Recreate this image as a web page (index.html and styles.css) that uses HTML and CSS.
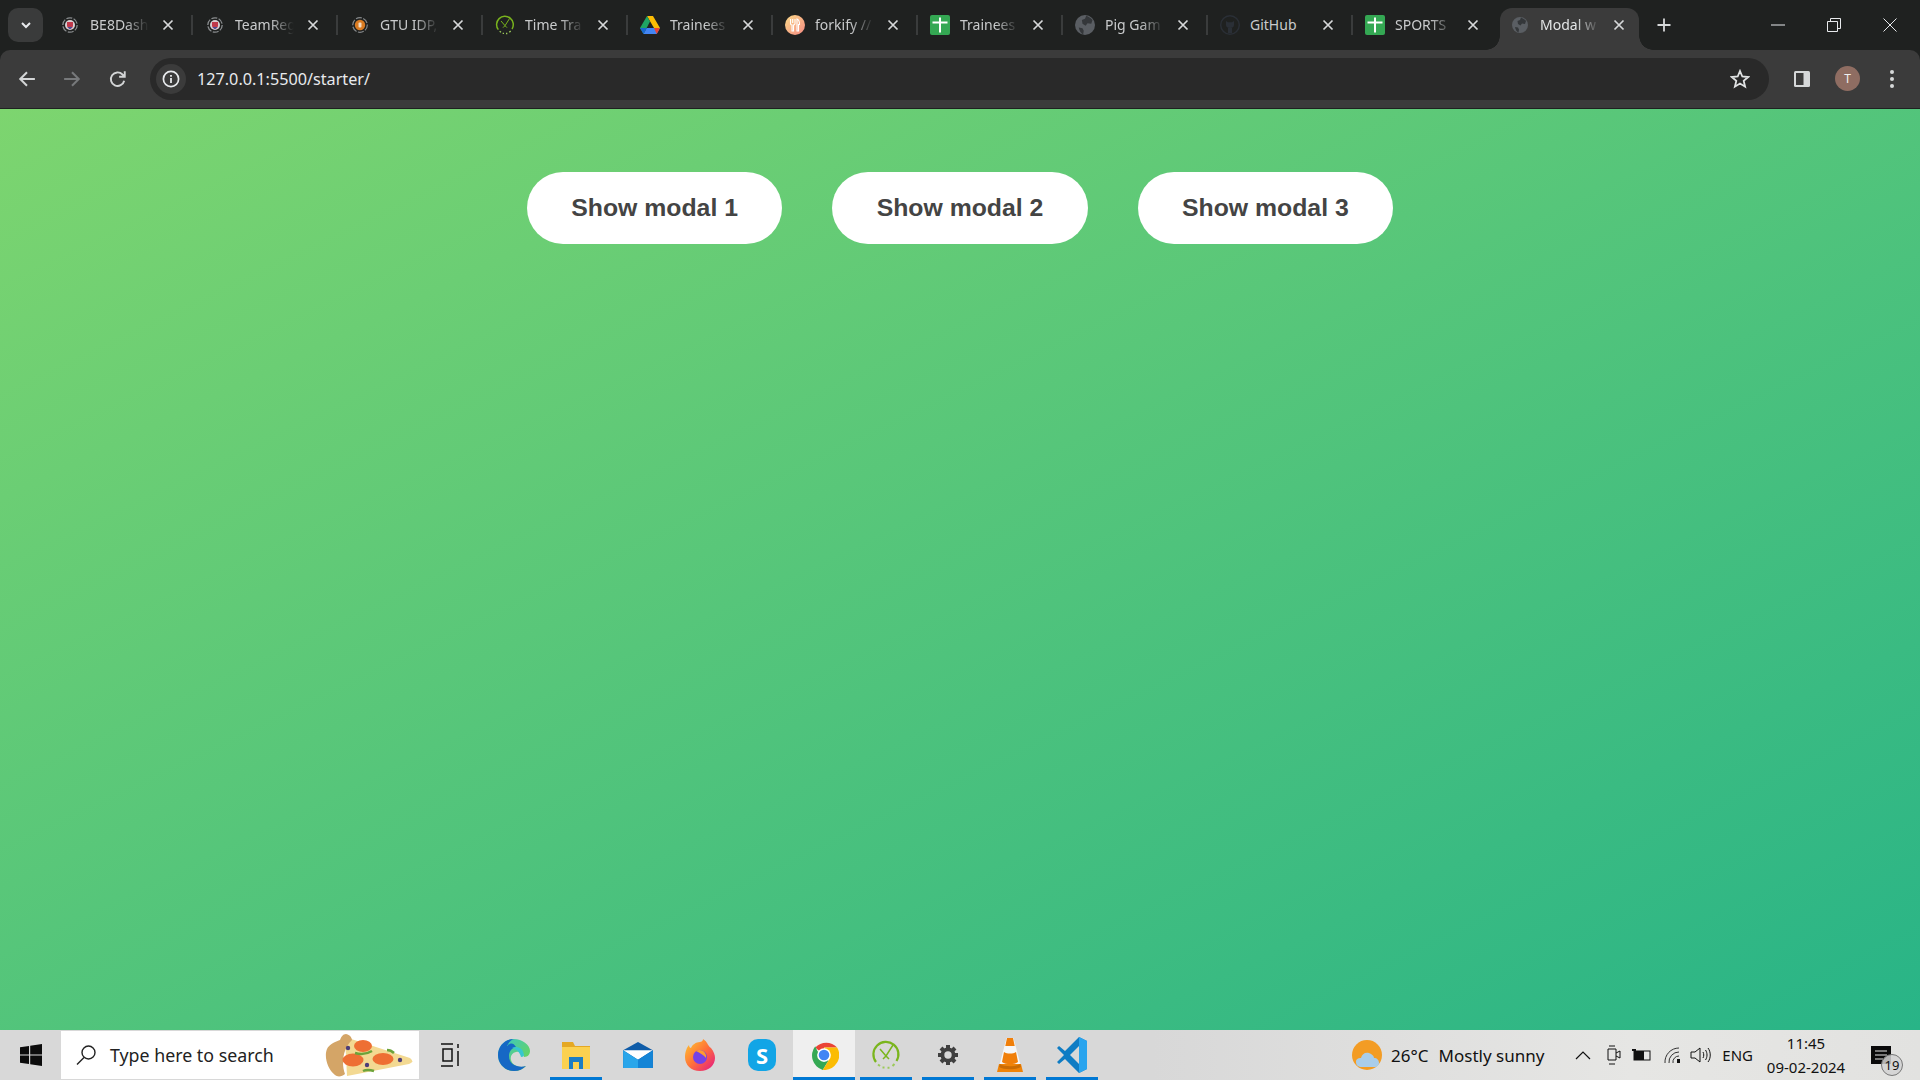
FILE: index.html
```html
<!DOCTYPE html>
<html lang="en">
  <head>
    <meta charset="UTF-8" />
    <title>Modal window</title>
    <link rel="stylesheet" href="styles.css" />
  </head>
  <body>
    <svg class="defs" width="0" height="0">
      <defs>
        <symbol id="i-close" viewBox="0 0 16 16">
          <path d="M3.5 3.5l9 9M12.5 3.5l-9 9" stroke="#d6d8d9" stroke-width="1.7" fill="none" />
        </symbol>
        <symbol id="i-shield" viewBox="0 0 16 16">
          <circle cx="8" cy="8" r="7.2" fill="none" stroke="#8a8d8f" stroke-width="1.3" stroke-dasharray="6 1.5" />
          <circle cx="8" cy="8" r="5" fill="#d9cfd2" />
          <path d="M5 5h6v3.5c0 2-1.5 3-3 3.5-1.500-.5-3-1.500-3-3.500z" fill="#c0394b" />
          <path d="M5.500 10h5l-2.500 2.200z" fill="#3f4f9c" />
        </symbol>
        <symbol id="i-sheet" viewBox="0 0 20 20">
          <rect width="20" height="20" rx="2" fill="#34a853" />
          <path d="M2.500 7.500h15M10 2.500v15" stroke="#fff" stroke-width="2" fill="none" />
        </symbol>
        <symbol id="i-globe" viewBox="0 0 16 16">
          <circle cx="8" cy="8" r="8" fill="#5a5e63" />
          <path d="M9 0.500c2 1 3.500 1.500 5 3.500l-1 3-3-.5-1.500 2-2.500-1.500-.5-3 2.500-1zM3 10l3 .5 1 2-.5 3C5 15 3.500 13 3 10z" fill="#34373a" />
        </symbol>
        <symbol id="i-clock" viewBox="0 0 30 30">
          <path d="M5 22A12.500 12.500 0 1 1 25.500 21" fill="none" stroke="#7ab51d" stroke-width="2.200" />
          <path d="M7 24.500l2 1.500M11.500 27.500h2M16.500 27.700h2M21.500 26l2-2" stroke="#9cc95a" stroke-width="2" fill="none" />
          <path d="M9 9l6 7 7-11M15 16l-3 3M15 16l3 3" stroke="#7ab51d" stroke-width="1.500" fill="none" />
        </symbol>
      </defs>
    </svg>

    <header class="browser">
      <div class="tab-strip">
        <button class="tab-search">
          <svg width="12" height="12" viewBox="0 0 12 12"><path d="M2 4l4 4 4-4" fill="none" stroke="#e8eaed" stroke-width="2" /></svg>
        </button>
        <div class="tab">
          <svg class="favicon"><use href="#i-shield" /></svg>
          <span class="tab-title">BE8Dash</span>
          <svg class="tab-close"><use href="#i-close" /></svg>
        </div>
        <div class="tab">
          <svg class="favicon"><use href="#i-shield" /></svg>
          <span class="tab-title">TeamReg</span>
          <svg class="tab-close"><use href="#i-close" /></svg>
        </div>
        <div class="tab">
          <svg class="favicon" viewBox="0 0 16 16">
            <circle cx="8" cy="8" r="7.300" fill="none" stroke="#85888a" stroke-width="1.200" stroke-dasharray="6 1.500" />
            <circle cx="8" cy="8" r="5.200" fill="#d97b22" />
            <rect x="6.500" y="5.500" width="3" height="5" rx="1" fill="#f4dcc2" />
          </svg>
          <span class="tab-title">GTU IDP,</span>
          <svg class="tab-close"><use href="#i-close" /></svg>
        </div>
        <div class="tab">
          <svg class="favicon-lg"><use href="#i-clock" /></svg>
          <span class="tab-title">Time Tra</span>
          <svg class="tab-close"><use href="#i-close" /></svg>
        </div>
        <div class="tab">
          <svg class="favicon-lg" viewBox="0 0 20 18">
            <path d="M7 0h6l7 12h-6z" fill="#fbbc04" />
            <path d="M7 0l3 5.500L3.500 18 0 12z" fill="#1fa463" />
            <path d="M3.500 18l3.200-6H20l-3.300 6z" fill="#4285f4" />
            <path d="M6.700 12L3.500 18 0 12z" fill="#1967d2" />
            <path d="M14 12h6l-3.300 6z" fill="#ea4335" />
          </svg>
          <span class="tab-title">Trainees</span>
          <svg class="tab-close"><use href="#i-close" /></svg>
        </div>
        <div class="tab">
          <svg class="favicon-lg" viewBox="0 0 20 20">
            <defs>
              <linearGradient id="fork" x1="0" y1="0" x2="1" y2="1"><stop offset="0" stop-color="#fbdb89" /><stop offset="1" stop-color="#f48982" /></linearGradient>
            </defs>
            <circle cx="10" cy="10" r="10" fill="url(#fork)" />
            <path d="M5.500 4v4.500c0 1 1 1.500 1.500 1.500v6h1.500v-6c.5 0 1.500-.5 1.500-1.500V4M7.700 4v4M12 16V4c1.500.5 2.500 2.500 2.500 5.500H13.500V16z" fill="none" stroke="#fff" stroke-width="1.100" />
          </svg>
          <span class="tab-title">forkify //</span>
          <svg class="tab-close"><use href="#i-close" /></svg>
        </div>
        <div class="tab">
          <svg class="favicon-lg"><use href="#i-sheet" /></svg>
          <span class="tab-title">Trainees</span>
          <svg class="tab-close"><use href="#i-close" /></svg>
        </div>
        <div class="tab">
          <svg class="favicon-lg"><use href="#i-globe" /></svg>
          <span class="tab-title">Pig Gam</span>
          <svg class="tab-close"><use href="#i-close" /></svg>
        </div>
        <div class="tab">
          <svg class="favicon-lg" viewBox="0 0 20 20">
            <circle cx="10" cy="10" r="9.300" fill="none" stroke="#2a2f36" stroke-width="1.400" />
            <path d="M6 6l2 1.200h4L14 6v4c0 2-1.500 3-4 3s-4-1-4-3zM8 13v5h4v-5z" fill="#2a2f36" />
          </svg>
          <span class="tab-title tab-title-plain">GitHub</span>
          <svg class="tab-close"><use href="#i-close" /></svg>
        </div>
        <div class="tab tab-last">
          <svg class="favicon-lg"><use href="#i-sheet" /></svg>
          <span class="tab-title">SPORTS</span>
          <svg class="tab-close"><use href="#i-close" /></svg>
        </div>
        <div class="tab tab-active">
          <svg class="favicon"><use href="#i-globe" /></svg>
          <span class="tab-title">Modal w</span>
          <svg class="tab-close"><use href="#i-close" /></svg>
        </div>
        <svg class="new-tab" width="16" height="16" viewBox="0 0 16 16"><path d="M8 1.500v13M1.500 8h13" stroke="#d6d8d9" stroke-width="1.800" /></svg>
        <div class="window-controls">
          <svg width="14" height="14" viewBox="0 0 14 14"><path d="M0 7h14" stroke="#e8eaed" /></svg>
          <svg width="14" height="14" viewBox="0 0 14 14"><path d="M.5 3.500h10v10H.5zM3.500 3.500v-3h10v10h-3" fill="none" stroke="#e8eaed" /></svg>
          <svg width="14" height="14" viewBox="0 0 14 14"><path d="M.5.500l13 13M13.500.500l-13 13" stroke="#e8eaed" /></svg>
        </div>
      </div>

      <div class="toolbar">
        <svg class="tool-icon" viewBox="0 0 16 16"><path d="M15 8H2M8 2L2 8l6 6" fill="none" stroke="#d3d5d6" stroke-width="1.800" /></svg>
        <svg class="tool-icon" viewBox="0 0 16 16"><path d="M1 8h13M8 2l6 6-6 6" fill="none" stroke="#77797b" stroke-width="1.800" /></svg>
        <svg class="tool-icon" viewBox="0 0 16 16"><path d="M13.500 9.500A6 6 0 1 1 12 4l1.500 1.500M14 1v5H9" fill="none" stroke="#d3d5d6" stroke-width="1.700" /></svg>
        <div class="address-bar">
          <span class="site-info">
            <svg width="18" height="18" viewBox="0 0 18 18">
              <circle cx="9" cy="9" r="7.600" fill="none" stroke="#e8eaed" stroke-width="1.700" />
              <path d="M9 8v5M9 5v1.800" stroke="#e8eaed" stroke-width="1.800" />
            </svg>
          </span>
          <span class="url">127.0.0.1:5500/starter/</span>
          <svg class="star" width="20" height="20" viewBox="0 0 20 20"><path d="M10 2l2.300 5.500 5.900.5-4.500 3.900 1.400 5.800L10 14.600l-5.100 3.100 1.400-5.800L1.800 8l5.900-.5z" fill="none" stroke="#e0e2e3" stroke-width="1.800" /></svg>
        </div>
        <div class="toolbar-right">
          <svg width="18" height="18" viewBox="0 0 18 18"><rect x="1" y="1" width="16" height="16" rx="1.500" fill="#d6d8d9" /><rect x="3" y="3" width="7.500" height="12" fill="#3b3b3b" /></svg>
          <span class="avatar">T</span>
          <svg width="6" height="20" viewBox="0 0 6 20"><circle cx="3" cy="3" r="2" fill="#d6d8d9" /><circle cx="3" cy="10" r="2" fill="#d6d8d9" /><circle cx="3" cy="17" r="2" fill="#d6d8d9" /></svg>
        </div>
      </div>
    </header>

    <main class="page">
      <button class="show-modal">Show modal 1</button>
      <button class="show-modal">Show modal 2</button>
      <button class="show-modal">Show modal 3</button>
    </main>

    <footer class="taskbar">
      <div class="start">
        <svg width="22" height="22" viewBox="0 0 22 22"><path d="M0 3.200l9-1.300v8.500H0zM10.200 1.700L22 0v10.400H10.200zM0 11.600h9v8.500l-9-1.300zM10.200 11.600H22V22l-11.800-1.700z" fill="#0c0c0c" /></svg>
      </div>
      <div class="search-box">
        <svg width="22" height="22" viewBox="0 0 22 22"><circle cx="13.500" cy="8.500" r="6.500" fill="none" stroke="#222" stroke-width="1.400" /><path d="M9 13.500L2 20.500" stroke="#222" stroke-width="1.500" /></svg>
        <span class="search-text">Type here to search</span>
        <svg class="pizza" width="88" height="43" viewBox="0 0 88 43">
          <path d="M20 3L85 24Q90 28 84 30L22 42z" fill="#f3d992" />
          <path d="M21 0C26 1 27 5 27 6 18 14 16 30 20 40 17 43 12 43 10 41 2 35-1 22 2 15 4 10 12 7 15 6 16 3 18 0 21 0z" fill="#d4a567" />
          <ellipse cx="38" cy="12" rx="9" ry="6" fill="#ee6f33" />
          <ellipse cx="28" cy="26" rx="10.500" ry="6.500" fill="#ee6f33" />
          <ellipse cx="58" cy="25" rx="10.500" ry="6" fill="#ee6f33" />
          <path d="M30 19c6 2 12 1 17-2M38 37c4-2 8-1 11 0M62 16c3 0 5 1 7 3" fill="none" stroke="#6ca33a" stroke-width="2.500" />
          <circle cx="23" cy="14" r="2.200" fill="#4d3d78" />
          <circle cx="42" cy="31" r="2.200" fill="#4d3d78" />
          <circle cx="75" cy="26" r="2.200" fill="#4d3d78" />
        </svg>
      </div>

      <div class="task-slot task-view">
        <svg width="20" height="24" viewBox="0 0 20 24"><path d="M1 1h12M1 23h12M3 6h9v12H3zM1 5h0M18 1v4M18 8v15" fill="none" stroke="#111" stroke-width="1.500" /></svg>
      </div>
      <div class="task-slot">
        <svg width="32" height="32" viewBox="0 0 32 32">
          <defs>
            <linearGradient id="edge" x1="0" y1="0" x2="1" y2="1"><stop offset="0" stop-color="#37c6d0" /><stop offset="1" stop-color="#75d83f" /></linearGradient>
          </defs>
          <path d="M16 0C7 0 0 7 0 16c0 9 7 16 16 16 5 0 9-2 12-5-5 2-13 1-15-6-1-4 1-7 5-8 5-1 8 1 8 5 4 0 6-3 6-6C32 6 24 0 16 0z" fill="url(#edge)" />
          <path d="M16 0C7 0 0 7 0 16c0 9 7 16 16 16 5 0 9-2 12-5-6 2-17 0-17-10 0-5 3-8 7-9C15 3 12 4 9 7 11 3 14 0 16 0z" fill="#1668c5" />
          <path d="M14 9c4-2 11-1 12 7 0 1-1 2-3 2-1-5-5-8-9-9z" fill="#37c6d0" />
        </svg>
      </div>
      <div class="task-slot is-running">
        <svg width="28" height="28" viewBox="0 0 28 28">
          <path d="M0 1h11l2 4h15v4H0z" fill="#e5a823" />
          <rect y="6" width="28" height="22" fill="#fbd150" />
          <rect x="7" y="16" width="14" height="12" fill="#1b7dc4" />
          <rect x="11" y="21" width="6" height="7" fill="#fbd150" />
        </svg>
      </div>
      <div class="task-slot">
        <svg width="32" height="26" viewBox="0 0 32 28">
          <path d="M0 9L16 0l16 9v19H0z" fill="#0f5ca8" />
          <path d="M0 9h32L16 19z" fill="#fff" />
          <path d="M0 9l16 10v9H0z" fill="#2aa6ea" />
          <path d="M32 9L16 19v9h16z" fill="#1484d6" />
        </svg>
      </div>
      <div class="task-slot">
        <svg width="30" height="32" viewBox="0 0 30 32">
          <defs>
            <linearGradient id="fox" x1="0" y1="0" x2="1" y2="1"><stop offset="0" stop-color="#ffcc2e" /><stop offset="0.500" stop-color="#ff7139" /><stop offset="1" stop-color="#e31587" /></linearGradient>
          </defs>
          <path d="M15 3c3 0 3-3 3-3 5 3 4 6 8 9 3 4 4 7 4 10 0 7-6 13-15 13S0 26 0 18C0 13 2 8 4 6c0 2 1 3 2 3 1-3 5-6 9-6z" fill="url(#fox)" />
          <circle cx="15" cy="18" r="7" fill="#7542e5" />
          <path d="M11 12c5-3 11 1 10 7-2-3-6-5-10-7z" fill="#ff9c30" />
        </svg>
      </div>
      <div class="task-slot">
        <span class="skype">S</span>
      </div>
      <div class="task-slot is-running is-active">
        <svg width="30" height="30" viewBox="0 0 48 48">
          <path d="M24 24L10.100 12A24 24 0 0 1 45 12H24z" fill="#ea4335" />
          <path d="M24 24l-10.500-6L10 10A24 24 0 0 0 22 47.900L31 33z" fill="#34a853" />
          <path d="M24 12h21A24 24 0 0 1 22 47.900L33 30z" fill="#fbbc04" />
          <circle cx="24" cy="24" r="11" fill="#fff" />
          <circle cx="24" cy="24" r="8.500" fill="#4285f4" />
        </svg>
      </div>
      <div class="task-slot is-running">
        <svg width="30" height="36"><use href="#i-clock" /></svg>
      </div>
      <div class="task-slot is-running">
        <svg width="24" height="24" viewBox="0 0 24 24"><path d="M12 4.500a7.500 7.500 0 1 0 0 15 7.500 7.500 0 0 0 0-15zM12 8.500a3.500 3.500 0 1 1 0 7 3.500 3.500 0 0 1 0-7z" fill="#404040" fill-rule="evenodd" /><path d="M12 2v20M2 12h20M5 5l14 14M19 5L5 19" stroke="#404040" stroke-width="4" /><circle cx="12" cy="12" r="3.700" fill="#d8d8d8" /></svg>
      </div>
      <div class="task-slot is-running">
        <svg width="26" height="36" viewBox="0 0 26 36">
          <path d="M9.500 1h7l7 27H2.500z" fill="#f6f6f6" />
          <path d="M10 1h6l1.700 8H8.300zM7 15c3 2 9 2 12 0l2 10c-4 3-12 3-16 0z" fill="#f07f0a" />
          <path d="M2 27h22l2 8H0z" fill="#ef8308" />
          <path d="M3 27c4 3 16 3 20 0l1 3c-5 3-17 3-22 0z" fill="#c96c05" />
        </svg>
      </div>
      <div class="task-slot is-running">
        <svg width="30" height="36" viewBox="0 0 30 36">
          <path d="M22 0l8 4v28l-8 4L8 22l-6 5-2-2 7-7-7-7 2-2 6 5z" fill="#0e7cc4" />
          <path d="M22 9L13 18l9 9z" fill="#d8d8d8" />
          <path d="M22 0l8 4v28l-8 4z" fill="#29a4ee" />
        </svg>
      </div>

      <div class="tray">
        <div class="weather">
          <svg width="30" height="32" viewBox="0 0 30 32">
            <circle cx="15" cy="16" r="15" fill="#f39c24" />
            <path d="M10 28c-4 0-6-2-6-5s2-4 5-4c1-4 4-6 8-5 3 1 5 3 5 5 3 0 5 2 5 5 0 2-2 4-4 4z" fill="#a9cdea" />
          </svg>
          <span class="temp">26°C</span>
          <span>Mostly sunny</span>
        </div>
        <svg class="tray-chevron" width="16" height="10" viewBox="0 0 16 10"><path d="M1 9l7-7 7 7" fill="none" stroke="#111" stroke-width="1.200" /></svg>
        <svg class="tray-icon" width="16" height="22" viewBox="0 0 16 22"><path d="M2 5h8v11H2zM10 9l4-2v7l-4-2M3 2h6M3 20h6" fill="none" stroke="#111" /></svg>
        <svg class="tray-icon tray-battery" width="20" height="12" viewBox="0 0 20 12"><rect x="2" y="2" width="16" height="9" fill="none" stroke="#111" /><rect x="2" y="2" width="10" height="9" fill="#111" /><path d="M0 1h4" stroke="#111" stroke-width="2" /></svg>
        <svg class="tray-icon tray-wifi" width="18" height="18" viewBox="0 0 18 18"><path d="M1 17A14 14 0 0 1 15 2M5 17A10 10 0 0 1 15 6M9 17a6 6 0 0 1 6-7" fill="none" stroke="#333" /><rect x="13" y="13" width="3" height="4" fill="#111" /></svg>
        <svg class="tray-icon" width="21" height="18" viewBox="0 0 21 18"><path d="M1 6h4l5-4v14l-5-4H1zM13 6c1 2 1 4 0 6M15.500 4c2 3 2 7 0 10M18 2c3 4 3 10 0 14" fill="none" stroke="#111" /></svg>
        <span class="lang">ENG</span>
        <div class="clock">
          <span>11:45</span>
          <span>09-02-2024</span>
        </div>
        <div class="notify">
          <svg width="20" height="18" viewBox="0 0 20 18"><path d="M0 0h20v18H0z" fill="#0a0a0a" /><path d="M4 5h12M4 9h12M4 13h8" stroke="#e4e4e4" /></svg>
          <span class="notify-count">19</span>
        </div>
      </div>
    </footer>
  </body>
</html>
```

FILE: styles.css
```css
/* Variables */
:root {
  --strip-bg: #1f2120;
  --toolbar-bg: #3b3b3b;
  --bar-bg: #292929;
  --tab-text: #c9cbcc;
  --running: #0078d4;
}

* {
  box-sizing: border-box;
}

html,
body {
  height: 100%;
}

body {
  margin: 0;
  display: flex;
  flex-direction: column;
  overflow: hidden;
  font-family: "Noto Sans", "Open Sans", sans-serif;
  background: var(--strip-bg);
}

.defs {
  position: absolute;
}

/* Browser chrome */
.browser {
  flex: none;
  height: 109px;
  background: var(--strip-bg);
}

.tab-strip {
  display: flex;
  align-items: center;
  height: 50px;
  padding-left: 8px;
}

.tab-search {
  display: flex;
  align-items: center;
  justify-content: center;
  width: 35px;
  height: 34px;
  margin-right: 5px;
  padding: 0;
  border: none;
  border-radius: 10px;
  background: #3a3b3b;
}

.tab {
  position: relative;
  display: flex;
  align-items: center;
  flex: none;
  width: 145px;
  height: 20px;
  padding: 0 15px 0 14px;
  border-right: 2px solid #3a3c3c;
}

.favicon,
.favicon-lg {
  flex: none;
  width: 16px;
  height: 16px;
}

.favicon-lg {
  width: 20px;
  height: 20px;
  margin-left: -2px;
  margin-right: -2px;
}

.tab-title {
  flex: 1;
  min-width: 0;
  margin: 0 6px 0 12px;
  white-space: nowrap;
  color: var(--tab-text);
  font-size: 14px;
  line-height: 20px;
  -webkit-mask-image: linear-gradient(to right, #000 55%, transparent 92%);
  mask-image: linear-gradient(to right, #000 55%, transparent 92%);
}

.tab-title-plain {
  -webkit-mask-image: none;
  mask-image: none;
}

.tab-close {
  flex: none;
  width: 16px;
  height: 16px;
}

.tab-last {
  width: 147px;
  padding-right: 19px;
  border-right: none;
}

.tab-active {
  align-self: flex-end;
  width: 139px;
  height: 42px;
  padding: 0 12px 8px;
  border-right: none;
  border-radius: 12px 12px 0 0;
  background: var(--toolbar-bg);
}

.tab-active::before,
.tab-active::after {
  content: "";
  position: absolute;
  bottom: 0;
  width: 14px;
  height: 14px;
}

.tab-active::before {
  left: -14px;
  background: radial-gradient(circle at 0 0, transparent 13.5px, var(--toolbar-bg) 14px);
}

.tab-active::after {
  right: -14px;
  background: radial-gradient(circle at 100% 0, transparent 13.5px, var(--toolbar-bg) 14px);
}

.tab-active .tab-title {
  margin: 0 6px 0 12px;
  color: #e4e6e7;
}

.new-tab {
  flex: none;
  margin-left: 17px;
}

.window-controls {
  display: flex;
  margin-left: auto;
  margin-right: 2px;
}

.window-controls svg {
  box-sizing: content-box;
  width: 14px;
  height: 14px;
  padding: 0 21px;
}

.toolbar {
  display: flex;
  align-items: center;
  height: 58px;
  padding: 0 16px 1px 18px;
  gap: 0;
  border-radius: 10px 10px 0 0;
  background: var(--toolbar-bg);
}

.tool-icon {
  flex: none;
  width: 18px;
  height: 18px;
  margin-right: 27px;
}

.tool-icon:nth-child(2) {
  margin-right: 28px;
}

.tool-icon:nth-child(3) {
  margin-right: 23px;
}

.address-bar {
  display: flex;
  align-items: center;
  flex: 1;
  height: 42px;
  margin-top: 1px;
  padding: 0 19px 0 6px;
  border-radius: 21px;
  background: var(--bar-bg);
}

.site-info {
  display: flex;
  align-items: center;
  justify-content: center;
  width: 30px;
  height: 30px;
  border-radius: 50%;
  background: #3b3b3b;
}

.url {
  flex: 1;
  margin-left: 11px;
  color: #e8eaed;
  font-size: 16.2px;
}

.toolbar-right {
  display: flex;
  align-items: center;
  flex: none;
  width: 135px;
  padding-left: 24px;
}

.avatar {
  display: flex;
  align-items: center;
  justify-content: center;
  width: 25px;
  height: 25px;
  margin: 0 29px 0 24px;
  border-radius: 50%;
  background: #8f6d62;
  color: #f0f0f0;
  font-size: 12px;
}

/* Page */
.page {
  flex: 1;
  display: flex;
  align-items: flex-start;
  justify-content: center;
  gap: 50px;
  padding-top: 63px;
  background: linear-gradient(to top left, #28b487, #7dd56f);
}

.show-modal {
  width: 255.4px;
  height: 72px;
  padding: 0 0 1px;
  border: none;
  border-radius: 36px;
  background: #fff;
  color: #444;
  font-family: "Liberation Sans", Arial, sans-serif;
  font-size: 24.8px;
  font-weight: 700;
}

/* Taskbar */
.taskbar {
  flex: none;
  display: flex;
  align-items: center;
  height: 50px;
  background: linear-gradient(to right, #d8d8d8 0%, #d8d8d8 60%, #e6e6e4 85%, #e2e2e0 100%);
  color: #111;
}

.start {
  display: flex;
  align-items: center;
  justify-content: center;
  flex: none;
  width: 61px;
}

.search-box {
  display: flex;
  align-items: center;
  flex: none;
  width: 358px;
  height: 48px;
  margin-right: 2px;
  padding: 0 6px 0 14px;
  background: #fff;
}

.search-text {
  flex: 1;
  margin-left: 13px;
  color: #222;
  font-size: 17.8px;
}

.task-slot {
  position: relative;
  display: flex;
  align-items: center;
  justify-content: center;
  flex: none;
  width: 62px;
  height: 50px;
}

.task-view {
  padding-right: 5px;
}

.task-slot.is-running::after {
  content: "";
  position: absolute;
  left: 5px;
  right: 5px;
  bottom: 0;
  height: 3px;
  background: var(--running);
}

.task-slot.is-active {
  background: #efefef;
}

.task-slot.is-active::after {
  left: 0;
  right: 0;
}

.skype {
  display: flex;
  align-items: center;
  justify-content: center;
  width: 28px;
  height: 32px;
  border-radius: 10px;
  background: #12a5e6;
  color: #fff;
  font-size: 22px;
  font-weight: 700;
}

.tray {
  display: flex;
  align-items: center;
  margin-left: auto;
  font-size: 17px;
}

.weather {
  display: flex;
  align-items: center;
  margin-right: 31px;
}

.temp {
  margin: 0 10px 0 9px;
}

.tray-chevron {
  margin-right: 15px;
}

.tray-icon {
  margin-right: 10px;
}

.tray-battery {
  margin-right: 12px;
}

.tray-wifi {
  margin-right: 8px;
}

.lang {
  margin-left: 1px;
  font-size: 15px;
}

.clock {
  display: flex;
  flex-direction: column;
  align-items: center;
  width: 100px;
  margin-left: 3px;
  font-size: 15px;
  line-height: 24px;
}

.notify {
  position: relative;
  width: 64px;
  padding-left: 15px;
}

.notify svg {
  display: block;
}

.notify-count {
  position: absolute;
  left: 25px;
  top: 8px;
  width: 22px;
  height: 22px;
  border: 1px solid #777;
  border-radius: 50%;
  background: rgba(210, 210, 210, 0.85);
  font-size: 13px;
  line-height: 20px;
  text-align: center;
}
```
